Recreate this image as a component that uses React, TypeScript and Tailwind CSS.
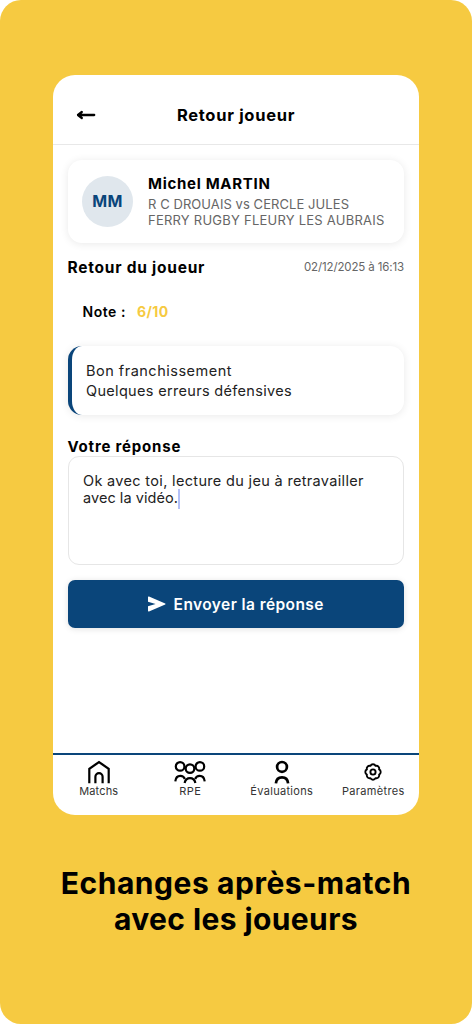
import { ReactNode } from "react";

interface NavItem {
  label: string;
  icon: ReactNode;
  className: string;
}

const HomeIcon = () => (
  <svg width="22" height="24" viewBox="0 0 22 24" fill="none" stroke="black" strokeWidth="2.2">
    <path d="M1.3 23.2V8.800L11 2l9.700 6.800v14.400" />
    <path d="M7.400 23.200v-6.400a3.600 3.600 0 0 1 7.200 0v6.400" />
  </svg>
);

const GroupIcon = () => (
  <svg width="32" height="24" viewBox="0 0 32 24" fill="none" stroke="black" strokeWidth="2.2">
    <circle cx="6.100" cy="6.400" r="4.300" />
    <circle cx="25.900" cy="6.400" r="4.300" />
    <circle cx="16" cy="8.600" r="4.300" />
    <path d="M1.300 21.400c.4-3.600 2.400-5.500 5-5.500 2.100 0 3.800 1.100 4.600 3.100M30.700 21.400c-.4-3.600-2.400-5.500-5-5.500-2.100 0-3.800 1.100-4.600 3.100" />
    <path d="M10.600 22.900c.7-3 2.700-4.700 5.400-4.700s4.700 1.700 5.400 4.700" />
  </svg>
);

const PersonIcon = () => (
  <svg width="16" height="24" viewBox="0 0 16 24" fill="none" stroke="black" strokeWidth="2.700">
    <circle cx="8" cy="6.900" r="4.900" />
    <path d="M1.900 23.400c.3-3.800 2.700-6.100 6.100-6.100s5.800 2.300 6.100 6.100" />
  </svg>
);

const GearIcon = () => (
  <svg width="18" height="18" viewBox="0 0 18 18" fill="none" stroke="black" strokeWidth="1.900" strokeLinejoin="round">
    <path d="M15.100 6.470A2.800 2.800 0 0 1 15.100 11.530A2.800 2.800 0 0 1 11.530 15.100A2.800 2.800 0 0 1 6.470 15.100A2.800 2.800 0 0 1 2.900 11.530A2.800 2.800 0 0 1 2.900 6.470A2.800 2.800 0 0 1 6.470 2.900A2.800 2.800 0 0 1 11.530 2.900A2.800 2.800 0 0 1 15.100 6.470Z" />
    <circle cx="9" cy="9" r="2.600" />
  </svg>
);

const NAV: NavItem[] = [
  { label: "Matchs", icon: <HomeIcon />, className: "tracking-[0.13px]" },
  { label: "RPE", icon: <GroupIcon />, className: "tracking-[0.43px]" },
  { label: "Évaluations", icon: <PersonIcon />, className: "tracking-[0.32px]" },
  { label: "Paramètres", icon: <GearIcon />, className: "tracking-[0.32px]" },
];

const card = "bg-white rounded-[14px] shadow-[0_1px_8px_rgba(0,0,0,0.09)]";

export default function App() {
  return (
    <div className="h-[1024px] bg-white font-['Inter',sans-serif] text-black">
      <div className="h-full bg-[#f6ca41] rounded-[21px] pt-[75px] flex flex-col items-center whitespace-nowrap">
        <div className="w-[366px] h-[740px] bg-white rounded-[22px] overflow-hidden flex flex-col">
          <header className="h-[70px] shrink-0 border-b border-[#e8e8e8] pt-[11px] px-[23px] grid grid-cols-[20px_1fr_20px] items-center">
            <svg width="20" height="12" viewBox="0 0 20 12" fill="none" stroke="black" strokeWidth="2.300" strokeLinecap="round" strokeLinejoin="round">
              <path d="M18.200 6H2M5.800 3L2 6l3.800 3" />
            </svg>
            <h1 className="text-center text-[16.5px] leading-5 font-bold tracking-[0.7px]">Retour joueur</h1>
          </header>

          <main className="flex-1 pl-[14.5px] pr-[15px] pt-[15px]">
            <section className={`${card} h-[82.5px] px-[14.5px] flex items-center`}>
              <div className="size-[51px] rounded-full bg-[#e0e7ed] text-[#0a457a] flex items-center justify-center text-base font-bold tracking-[0.3px]">
                MM
              </div>
              <div className="ml-[15px]">
                <h2 className="text-[15px] leading-5 font-bold tracking-[0.7px]">Michel MARTIN</h2>
                <p className="mt-[3px] text-[13px] leading-[15.500px] text-[#666]">
                  <span className="block tracking-[0.07px]">R C DROUAIS vs CERCLE JULES</span>
                  <span className="block tracking-[0.24px]">FERRY RUGBY FLEURY LES AUBRAIS</span>
                </p>
              </div>
            </section>

            <div className="mt-[13px] h-6 flex items-center justify-between">
              <h2 className="text-[15.500px] font-bold tracking-[0.76px]">Retour du joueur</h2>
              <span className="text-[11.500px] text-[#666] tracking-[-0.13px]">02/12/2025 à 16:13</span>
            </div>

            <div className="mt-[22px] pl-[15px] h-5 flex items-center gap-[11px] text-sm">
              <span className="font-semibold tracking-[0.55px]">Note :</span>
              <span className="font-bold text-[#f6ca41] tracking-[0.37px]">6/10</span>
            </div>

            <section className={`${card} mt-6 h-[69px] border-l-4 border-[#0a457a] pl-[14.5px] pt-[15.5px] text-[14.500px] leading-5 text-[#222]`}>
              <p className="tracking-[0.5px]">Bon franchissement</p>
              <p className="tracking-[0.32px]">Quelques erreurs défensives</p>
            </section>

            <h2 className="mt-[23px] text-[15px] leading-[18px] font-bold tracking-[0.8px]">Votre réponse</h2>
            <div className="mt-[0.5px] h-[109px] border border-[#e6e6e6] rounded-[11px] px-[14.5px] pt-[14.5px] text-[14.500px] leading-[17.500px] text-[#222]">
              <p className="tracking-[0.33px]">Ok avec toi, lecture du jeu à retravailler</p>
              <p className="flex h-[17.5px] tracking-[0.05px]">
                avec la vidéo.
                <span className="w-[2px] h-5 bg-[#b3c0f7]" />
              </p>
            </div>

            <button className="mt-[14.5px] w-full h-[48.500px] rounded-[7px] bg-[#0a457a] text-white shadow-[0_1px_6px_rgba(0,0,0,0.12)] pt-px flex items-center justify-center gap-2 text-[15.500px] font-semibold tracking-[0.42px]">
              <svg width="18" height="16" viewBox="0 0 18 16" fill="white">
                <path d="M0 1.200Q0 .2 1 .6L17.200 7.400Q18 8 17.200 8.600L1 15.400Q0 15.700 0 14.800V10.200L7.600 8L0 5.800Z" />
              </svg>
              Envoyer la réponse
            </button>
          </main>

          <nav className="h-[62.500px] border-t-2 border-[#0a457a] grid grid-cols-4 pt-[5px]">
            {NAV.map((item) => (
              <div key={item.label} className="flex flex-col items-center">
                <div className="h-6 flex items-center">{item.icon}</div>
                <span className={`text-[11px] leading-[14px] text-[#333] ${item.className}`}>{item.label}</span>
              </div>
            ))}
          </nav>
        </div>

        <h2 className="mt-[50px] text-center text-[30px] leading-9 font-bold">
          <span className="block tracking-[0.54px]">Echanges après-match</span>
          <span className="block tracking-[0.4px]">avec les joueurs</span>
        </h2>
      </div>
    </div>
  );
}
